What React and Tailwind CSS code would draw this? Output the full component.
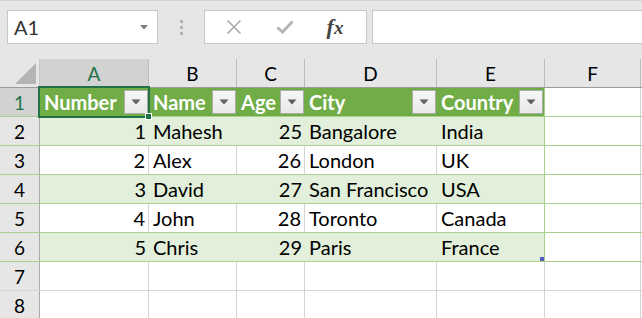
import React from "react";

const COLS = [
  { key: "A", w: "w-[109px]" },
  { key: "B", w: "w-[88px]" },
  { key: "C", w: "w-[68px]" },
  { key: "D", w: "w-[132px]" },
  { key: "E", w: "w-[108px]" },
  { key: "F", w: "w-[96px]" },
];

const HEADERS = ["Number", "Name", "Age", "City", "Country"];

const ROWS = [
  [1, "Mahesh", 25, "Bangalore", "India"],
  [2, "Alex", 26, "London", "UK"],
  [3, "David", 27, "San Francisco", "USA"],
  [4, "John", 28, "Toronto", "Canada"],
  [5, "Chris", 29, "Paris", "France"],
];

function FilterButton() {
  return (
    <div className="absolute right-[1px] top-[2px] w-[24px] h-[24px] border border-[#ababab] bg-gradient-to-b from-[#f7f7f7] to-[#e8e8e8] flex items-center justify-center">
      <svg width="10" height="6" viewBox="0 0 10 6">
        <path d="M0.5 0.5 L9.5 0.5 L5 5.5 Z" fill="#5f5f5f" />
      </svg>
    </div>
  );
}

function RowHeader({ n, selected }) {
  return (
    <div
      className={
        "w-[40px] shrink-0 border-r border-[#ababab] flex items-center justify-center pt-[2px] text-[19px] " +
        (selected ? "bg-[#d2d2d2] text-[#217346]" : "bg-[#e6e6e6] text-black")
      }
    >
      {n}
    </div>
  );
}

export default function App() {
  return (
    <div className="w-[642px] h-[318px] overflow-hidden bg-white relative font-['Lato','Liberation_Sans',sans-serif] text-black">
      {/* ribbon / formula bar */}
      <div className="h-[59px] bg-[#e6e6e6] border-t border-[#d4d4d4] flex items-start pt-[9px]">
        <div className="ml-[7px] w-[151px] h-[34px] bg-white border border-[#c6c6c6] flex items-center pl-[6px] pr-[9px]">
          <span className="text-[20px] text-[#333] flex-1">A1</span>
          <svg width="8" height="5" viewBox="0 0 8 5">
            <path d="M0 0 L8 0 L4 4.5 Z" fill="#7a7a7a" />
          </svg>
        </div>
        <div className="w-[46px] h-[34px] flex flex-col items-center justify-center gap-[3px]">
          <div className="w-[3px] h-[3px] bg-[#b4b4b4]" />
          <div className="w-[3px] h-[3px] bg-[#b4b4b4]" />
          <div className="w-[3px] h-[3px] bg-[#b4b4b4]" />
        </div>
        <div className="w-[163px] h-[34px] bg-white border border-[#c6c6c6] flex items-center">
          <div className="w-[55px] flex justify-center pl-[2px]">
            <svg width="16" height="16" viewBox="0 0 16 16">
              <path d="M1.5 1.5 L14.5 14.5 M14.5 1.5 L1.5 14.5" stroke="#aaaaaa" strokeWidth="1.6" />
            </svg>
          </div>
          <div className="w-[50px] flex justify-center">
            <svg width="18" height="14" viewBox="0 0 18 14">
              <path d="M1.5 7.5 L6.5 12 L16.5 1.5" stroke="#b4b4b4" strokeWidth="3" fill="none" />
            </svg>
          </div>
          <div className="w-[50px] flex justify-center">
            <span className="font-['Liberation_Serif',serif] italic font-bold text-[22px] text-[#444] leading-none">
              f<span className="text-[19px]">x</span>
            </span>
          </div>
        </div>
        <div className="ml-[5px] flex-1 h-[34px] bg-white border-y border-l border-[#c6c6c6]" />
      </div>

      {/* column headers */}
      <div className="h-[29px] flex bg-[#e6e6e6] border-b border-[#9b9b9b]">
        <div className="w-[40px] shrink-0 border-r border-[#c6c6c6] relative">
          <svg className="absolute left-[15px] top-[4px]" width="22" height="22" viewBox="0 0 22 22">
            <path d="M0 21 L21 21 L21 0 Z" fill="#b4b4b4" />
          </svg>
        </div>
        {COLS.map((c) => (
          <div
            key={c.key}
            className={
              c.w +
              " shrink-0 border-r border-[#bcbcbc] flex items-center justify-center pt-[3px] text-[19px] " +
              (c.key === "A" ? "bg-[#d2d2d2] text-[#217346]" : "text-black")
            }
          >
            {c.key}
          </div>
        ))}
      </div>

      {/* table header row */}
      <div className="h-[29px] flex border-b border-[#a9d08e]">
        <RowHeader n={1} selected />
        {HEADERS.map((h, i) => (
          <div
            key={h}
            className={
              COLS[i].w +
              " shrink-0 relative bg-[#70ad47] text-white font-bold text-[20px] leading-none flex items-end pb-[4px] pl-[4px] " +
              (i === 4 ? "border-r border-[#a9d08e]" : "")
            }
          >
            {h}
            <FilterButton />
          </div>
        ))}
        <div className="w-[96px] shrink-0 border-r border-[#d4d4d4] bg-white" />
      </div>

      {/* data rows */}
      {ROWS.map((r, ri) => {
        const band = ri % 2 === 0;
        return (
          <div key={ri} className="h-[29px] flex border-b border-[#a9d08e]">
            <RowHeader n={ri + 2} />
            {r.map((v, ci) => {
              const num = typeof v === "number";
              return (
                <div
                  key={ci}
                  className={
                    COLS[ci].w +
                    " shrink-0 text-[20px] leading-none flex items-end pb-[4px] " +
                    (num ? "justify-end pr-[3px] " : "pl-[4px] ") +
                    (band ? "bg-[#e2efda] " : "bg-white ") +
                    (ci === 4
                      ? "border-r border-[#a9d08e]"
                      : band
                      ? ""
                      : "border-r border-[#d4d4d4]")
                  }
                >
                  {v}
                </div>
              );
            })}
            <div className="w-[96px] shrink-0 border-r border-[#d4d4d4] bg-white" />
          </div>
        );
      })}

      {/* empty rows */}
      {[7, 8].map((n) => (
        <div key={n} className="h-[29px] flex border-b border-[#d4d4d4]">
          <RowHeader n={n} />
          {COLS.map((c) => (
            <div key={c.key} className={c.w + " shrink-0 border-r border-[#d4d4d4]"} />
          ))}
        </div>
      ))}

      {/* active cell A1 */}
      <div className="absolute left-[38px] top-[86px] w-[112px] h-[32px] border-2 border-[#217346]" />
      <div className="absolute left-[145px] top-[113px] w-[7px] h-[7px] bg-[#217346] border border-white" />
      {/* table resize handle */}
      <div className="absolute left-[540px] top-[257px] w-[4px] h-[4px] bg-[#4f5bb5]" />
    </div>
  );
}
